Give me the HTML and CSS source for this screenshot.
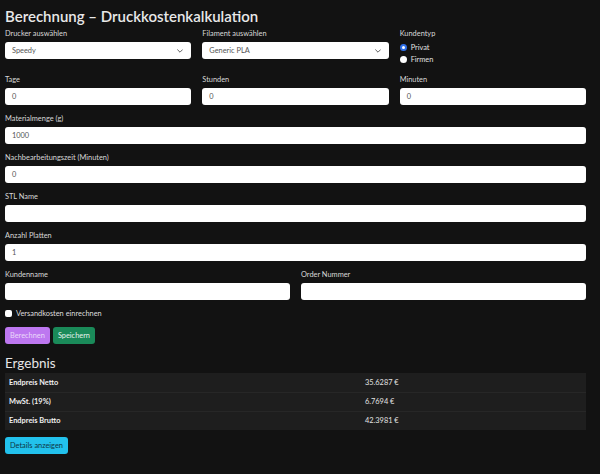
FILE: index.html
```
<!DOCTYPE html>
<html lang="de">
<head>
<meta charset="utf-8">
<title>Berechnung – Druckkostenkalkulation</title>
<link rel="stylesheet" href="styles.css">
</head>
<body>
<main class="page">
  <h1 class="title">Berechnung – Druckkostenkalkulation</h1>

  <div class="row row-3 row-first">
    <div class="group">
      <label class="label">Drucker auswählen</label>
      <div class="select"><span>Speedy</span><svg class="chev" viewBox="0 0 10 6" width="6" height="4"><path d="M1 1l4 4 4-4" fill="none" stroke="#444" stroke-width="1.4" stroke-linecap="round" stroke-linejoin="round"/></svg></div>
    </div>
    <div class="group">
      <label class="label">Filament auswählen</label>
      <div class="select"><span>Generic PLA</span><svg class="chev" viewBox="0 0 10 6" width="6" height="4"><path d="M1 1l4 4 4-4" fill="none" stroke="#444" stroke-width="1.4" stroke-linecap="round" stroke-linejoin="round"/></svg></div>
    </div>
    <div class="group">
      <label class="label">Kundentyp</label>
      <div class="radio"><span class="dot dot-on"></span>Privat</div>
      <div class="radio"><span class="dot"></span>Firmen</div>
    </div>
  </div>

  <div class="row row-3">
    <div class="group">
      <label class="label">Tage</label>
      <div class="input">0</div>
    </div>
    <div class="group">
      <label class="label">Stunden</label>
      <div class="input">0</div>
    </div>
    <div class="group">
      <label class="label">Minuten</label>
      <div class="input">0</div>
    </div>
  </div>

  <div class="group">
    <label class="label">Materialmenge (g)</label>
    <div class="input">1000</div>
  </div>
  <div class="group">
    <label class="label">Nachbearbeitungszeit (Minuten)</label>
    <div class="input">0</div>
  </div>
  <div class="group">
    <label class="label">STL Name</label>
    <div class="input"></div>
  </div>
  <div class="group">
    <label class="label">Anzahl Platten</label>
    <div class="input">1</div>
  </div>

  <div class="row row-2">
    <div class="group">
      <label class="label">Kundenname</label>
      <div class="input"></div>
    </div>
    <div class="group">
      <label class="label">Order Nummer</label>
      <div class="input"></div>
    </div>
  </div>

  <div class="check"><span class="box"></span>Versandkosten einrechnen</div>

  <div class="buttons">
    <button class="btn btn-purple">Berechnen</button>
    <button class="btn btn-green">Speichern</button>
  </div>

  <h2 class="subtitle">Ergebnis</h2>
  <table class="result">
    <tr><th>Endpreis Netto</th><td>35.6287 €</td></tr>
    <tr><th>MwSt. (19%)</th><td>6.7694 €</td></tr>
    <tr><th>Endpreis Brutto</th><td>42.3981 €</td></tr>
  </table>

  <button class="btn btn-info">Details anzeigen</button>
</main>
</body>
</html>
```
FILE: styles.css
```
* { box-sizing: border-box; }
html, body { margin: 0; background: #121212; }
body {
  font-family: Lato, "Open Sans", sans-serif;
  color: #dedede;
  font-size: 7.4px;
}
.page { padding: 5px 14px 0 5px; }
.title {
  margin: 0;
  font-size: 15px;
  line-height: 22px;
  font-weight: 600;
  color: #e8e8e8;
}
.row { display: grid; column-gap: 11px; }
.row-3 { grid-template-columns: 1fr 1fr 1fr; }
.row-2 { grid-template-columns: 1fr 1fr; }
.row-first { margin-bottom: 1px; }
.group { margin-bottom: 7px; }
.label {
  display: block;
  line-height: 11px;
  margin-bottom: 3px;
  padding-top: 1px;
  color: #d8d8d8;
}
.input, .select {
  height: 17px;
  background: #fff;
  border-radius: 3px;
  color: #555;
  padding: 1px 7px 0;
  line-height: 16px;
  display: flex;
  align-items: center;
}
.select { justify-content: space-between; padding-right: 8px; }
.chev { display: block; }
.radio {
  display: flex;
  align-items: center;
  line-height: 11.5px;
  height: 11.5px;
  gap: 4px;
  color: #e0e0e0;
}
.dot {
  width: 7px; height: 7px; border-radius: 50%;
  background: #fff;
}
.dot-on {
  border: 2px solid #2f6fe8;
  box-shadow: inset 0 0 0 1.5px #fff;
  background: #fff;
}
.check {
  display: flex;
  align-items: center;
  gap: 4px;
  height: 12px;
  margin-bottom: 8px;
  color: #dedede;
}
.box {
  width: 7px; height: 7px; border-radius: 2px; background: #fff;
}
.buttons { display: flex; gap: 3px; }
.btn {
  font-family: inherit;
  font-size: 7.4px;
  height: 17px;
  border: 0;
  border-radius: 3px;
  padding: 0 5px;
  cursor: pointer;
}
.btn-purple { background: #bd77f0; color: #ead7fb; }
.btn-green { background: #1a8a59; color: #e6f3ec; }
.subtitle {
  margin: 10px 0 0;
  font-size: 13.5px;
  line-height: 19px;
  font-weight: 400;
  color: #e6e6e6;
}
.result {
  width: 100%;
  border-collapse: collapse;
  background: #1e1e1e;
  margin-top: 0;
}
.result th, .result td {
  height: 19px;
  padding: 0 4px;
  text-align: left;
  border-bottom: 1px solid #272727;
}
.result tr:last-child th, .result tr:last-child td { border-bottom: 0; }
.result th { width: 355px; font-weight: 700; color: #f0f0f0; }
.result td { color: #e2e2e2; padding-left: 5px; }
.btn-info {
  margin-top: 7px;
  background: #22c1ec;
  color: #0d3644;
}
```
